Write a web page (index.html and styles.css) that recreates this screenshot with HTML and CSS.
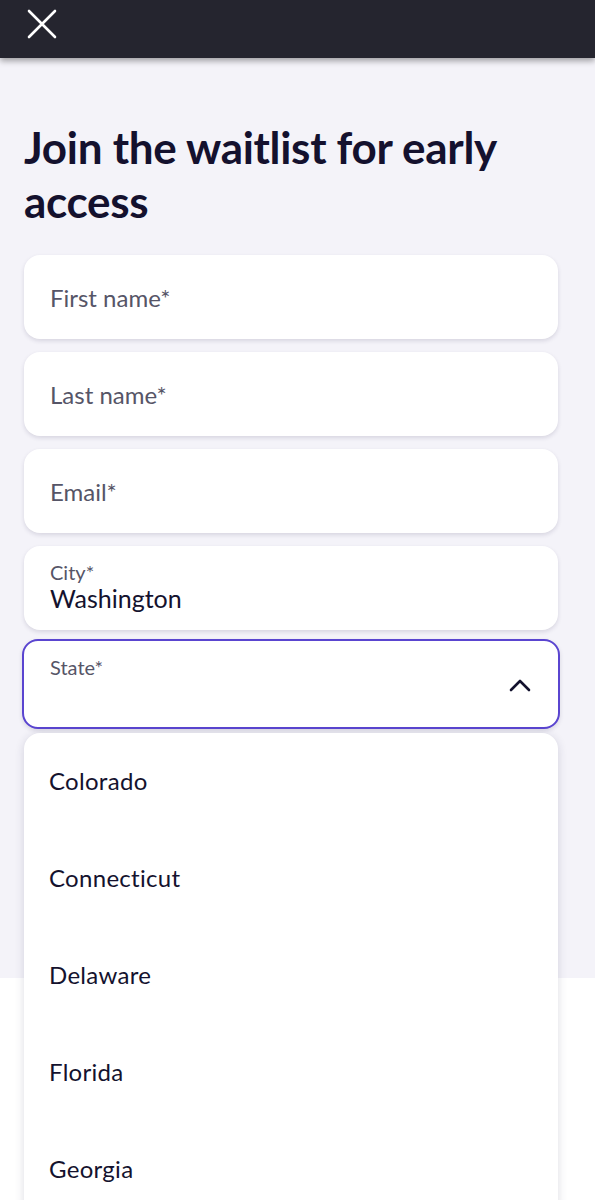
FILE: index.html
```html
<!DOCTYPE html>
<html lang="en">
<head>
<meta charset="utf-8">
<title>Join the waitlist</title>
<link rel="stylesheet" href="styles.css">
</head>
<body>
<header class="topbar">
  <button class="close" aria-label="Close">
    <svg width="32" height="32" viewBox="0 0 32 32"><path d="M3 3 L29 29 M29 3 L3 29" stroke="#fff" stroke-width="2.6" stroke-linecap="round" fill="none"/></svg>
  </button>
</header>
<main class="panel">
  <h1 class="title">Join the waitlist for early access</h1>
  <form class="form">
    <div class="field"><span class="placeholder">First name*</span></div>
    <div class="field"><span class="placeholder">Last name*</span></div>
    <div class="field"><span class="placeholder">Email*</span></div>
    <div class="field filled"><span class="label">City*</span><span class="value">Washington</span></div>
    <div class="select-wrap">
      <div class="field select">
        <span class="label">State*</span>
        <svg class="chev" width="22" height="14" viewBox="0 0 22 14"><path d="M2 12 L11 3 L20 12" stroke="#14122e" stroke-width="2.6" fill="none" stroke-linecap="round" stroke-linejoin="round"/></svg>
      </div>
      <ul class="menu">
        <li>Colorado</li>
        <li>Connecticut</li>
        <li>Delaware</li>
        <li>Florida</li>
        <li>Georgia</li>
      </ul>
    </div>
  </form>
</main>
<footer class="bottom"></footer>
</body>
</html>
```
FILE: styles.css
```css
* { box-sizing: border-box; }
html, body { margin: 0; padding: 0; }
body {
  background: #ffffff;
  font-family: "Lato", "Open Sans", sans-serif;
  color: #14122e;
  overflow: hidden;
  height: 1200px;
}
.topbar {
  height: 58px;
  background: #25252f;
  display: flex;
  align-items: center;
  padding-left: 26px;
  box-shadow: 0 3px 6px rgba(0,0,0,0.35);
  position: relative;
  z-index: 2;
}
.close {
  background: none;
  border: 0;
  padding: 0;
  width: 32px;
  height: 32px;
  margin-top: -10px;
}
.close svg { display: block; }
.panel {
  background: #f4f3f9;
  height: 920px;
  padding: 62px 24px 0 24px;
  position: relative;
  z-index: 1;
}
.title {
  margin: 0 0 27px 0;
  font-family: "Lato", sans-serif;
  font-weight: 700;
  font-size: 44px;
  line-height: 54px;
  letter-spacing: -0.3px;
  color: #14112e;
  max-width: 520px;
}
.form {
  display: flex;
  flex-direction: column;
  gap: 13px;
  width: 534px;
}
.field {
  background: #fff;
  height: 84px;
  border-radius: 16px;
  box-shadow: 0 2px 4px rgba(40,35,80,0.14);
  padding: 0 26px;
  display: flex;
  align-items: center;
  position: relative;
}
.placeholder {
  font-size: 24px;
  color: #565567;
}
.filled {
  flex-direction: column;
  align-items: flex-start;
  justify-content: flex-start;
  padding-top: 15px;
}
.label {
  font-size: 20px;
  color: #565567;
  line-height: 22px;
}
.value {
  font-size: 25px;
  line-height: 30px;
  color: #14122e;
}
.select-wrap { position: relative; margin-top: -4px; }
.select {
  height: 90px;
  margin: 0 -2px;
  border: 2px solid #5a45d0;
  padding: 15px 26px 0 26px;
  align-items: flex-start;
}
.chev {
  position: absolute;
  right: 27px;
  top: 37px;
}
.menu {
  list-style: none;
  margin: 0;
  padding: 0;
  position: absolute;
  left: 0;
  right: 0;
  top: 94px;
  background: #fff;
  border-radius: 16px;
  box-shadow: 0 2px 10px rgba(40,35,80,0.16);
}
.menu li {
  height: 97px;
  padding: 34px 25px 0 25px;
  font-size: 24px;
  line-height: 28px;
  letter-spacing: 0.3px;
  color: #14122e;
}
.bottom { height: 222px; background: #fff; }
```
